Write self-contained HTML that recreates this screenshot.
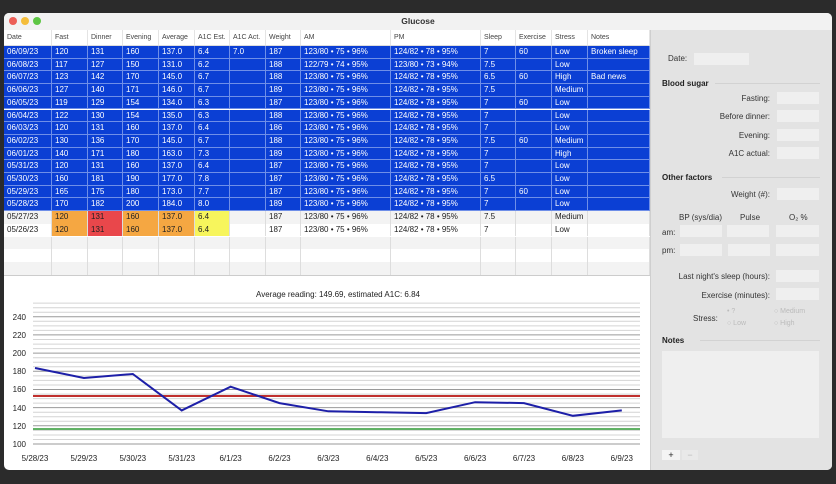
<!DOCTYPE html>
<html><head><meta charset="utf-8"><style>
*{margin:0;padding:0;box-sizing:border-box}
body{width:836px;height:484px;background:#2b2b2b;font-family:"Liberation Sans",Arial,sans-serif;font-size:8px;color:#222;position:relative;overflow:hidden}
.win{position:absolute;left:4px;top:13px;width:828px;height:457px;background:#fff;border-radius:5px;overflow:hidden}
.title{position:absolute;left:0;top:0;width:828px;height:17px;background:#f2f2f2;text-align:center;font-size:8.5px;font-weight:bold;line-height:17px;color:#333}
.dot{position:absolute;top:4px;width:8px;height:8px;border-radius:50%}
.hdr{position:absolute;left:0;top:17px;width:646px;height:16px;background:#fff;border-bottom:1px solid #ddd}
.row{position:absolute;left:0;width:646px;height:12.7px;display:flex}
.row div{height:100%;line-height:12.7px;padding-left:3px;white-space:nowrap;overflow:hidden;border-right:1px solid #ddd}
.hdr div{border-right:1px solid #e4e4e4;line-height:16px;padding-left:3px;height:100%;color:#444;font-size:7px}
.b{background:#0b3fd4;color:#fff}
.b div{border-right:1px solid #6f8fe8;border-bottom:1px solid #6f8fe8}
.c0{width:48px}.c1{width:36px}.c2{width:35px}.c3{width:36px}.c4{width:36px}.c5{width:35px}.c6{width:36px}.c7{width:35px}.c8{width:90px}.c9{width:90px}.c10{width:35px}.c11{width:36px}.c12{width:36px}.c13{width:62px}
.o{background:#f5a742}.r{background:#e9474b}.y{background:#f7f55c}
.side{position:absolute;left:646px;top:17px;width:182px;height:440px;background:#e3e3e3;border-left:1px solid #cfcfcf}
.lb{position:absolute;font-size:8px;color:#333;white-space:nowrap}
.rt{text-align:right;width:120px}
.f{position:absolute;background:#efefef;height:12px}
.bold{font-weight:bold;color:#222}
.ln{position:absolute;height:1px;background:#d2d2d2}
</style></head><body>
<div class="win">
<div class="title">Glucose</div>
<div class="dot" style="left:5px;background:#ec5f57"></div>
<div class="dot" style="left:17px;background:#f4bd3b"></div>
<div class="dot" style="left:29px;background:#5ec644"></div>
<div class="hdr" style="display:flex"><div class="c0">Date</div><div class="c1">Fast</div><div class="c2">Dinner</div><div class="c3">Evening</div><div class="c4">Average</div><div class="c5">A1C Est.</div><div class="c6">A1C Act.</div><div class="c7">Weight</div><div class="c8">AM</div><div class="c9">PM</div><div class="c10">Sleep</div><div class="c11">Exercise</div><div class="c12">Stress</div><div class="c13">Notes</div></div>

<div class="row b" style="top:33px"><div class="c0">06/09/23</div><div class="c1">120</div><div class="c2">131</div><div class="c3">160</div><div class="c4">137.0</div><div class="c5">6.4</div><div class="c6">7.0</div><div class="c7">187</div><div class="c8">123/80 • 75 • 96%</div><div class="c9">124/82 • 78 • 95%</div><div class="c10">7</div><div class="c11">60</div><div class="c12">Low</div><div class="c13">Broken sleep</div></div>
<div class="row b" style="top:45.7px"><div class="c0">06/08/23</div><div class="c1">117</div><div class="c2">127</div><div class="c3">150</div><div class="c4">131.0</div><div class="c5">6.2</div><div class="c6"></div><div class="c7">188</div><div class="c8">122/79 • 74 • 95%</div><div class="c9">123/80 • 73 • 94%</div><div class="c10">7.5</div><div class="c11"></div><div class="c12">Low</div><div class="c13"></div></div>
<div class="row b" style="top:58.4px"><div class="c0">06/07/23</div><div class="c1">123</div><div class="c2">142</div><div class="c3">170</div><div class="c4">145.0</div><div class="c5">6.7</div><div class="c6"></div><div class="c7">188</div><div class="c8">123/80 • 75 • 96%</div><div class="c9">124/82 • 78 • 95%</div><div class="c10">6.5</div><div class="c11">60</div><div class="c12">High</div><div class="c13">Bad news</div></div>
<div class="row b" style="top:71.1px"><div class="c0">06/06/23</div><div class="c1">127</div><div class="c2">140</div><div class="c3">171</div><div class="c4">146.0</div><div class="c5">6.7</div><div class="c6"></div><div class="c7">189</div><div class="c8">123/80 • 75 • 96%</div><div class="c9">124/82 • 78 • 95%</div><div class="c10">7.5</div><div class="c11"></div><div class="c12">Medium</div><div class="c13"></div></div>
<div class="row b" style="top:83.8px"><div class="c0">06/05/23</div><div class="c1">119</div><div class="c2">129</div><div class="c3">154</div><div class="c4">134.0</div><div class="c5">6.3</div><div class="c6"></div><div class="c7">187</div><div class="c8">123/80 • 75 • 96%</div><div class="c9">124/82 • 78 • 95%</div><div class="c10">7</div><div class="c11">60</div><div class="c12">Low</div><div class="c13"></div></div>
<div class="row b" style="top:96.5px"><div class="c0">06/04/23</div><div class="c1">122</div><div class="c2">130</div><div class="c3">154</div><div class="c4">135.0</div><div class="c5">6.3</div><div class="c6"></div><div class="c7">188</div><div class="c8">123/80 • 75 • 96%</div><div class="c9">124/82 • 78 • 95%</div><div class="c10">7</div><div class="c11"></div><div class="c12">Low</div><div class="c13"></div></div>
<div class="row b" style="top:109.2px"><div class="c0">06/03/23</div><div class="c1">120</div><div class="c2">131</div><div class="c3">160</div><div class="c4">137.0</div><div class="c5">6.4</div><div class="c6"></div><div class="c7">186</div><div class="c8">123/80 • 75 • 96%</div><div class="c9">124/82 • 78 • 95%</div><div class="c10">7</div><div class="c11"></div><div class="c12">Low</div><div class="c13"></div></div>
<div class="row b" style="top:121.9px"><div class="c0">06/02/23</div><div class="c1">130</div><div class="c2">136</div><div class="c3">170</div><div class="c4">145.0</div><div class="c5">6.7</div><div class="c6"></div><div class="c7">188</div><div class="c8">123/80 • 75 • 96%</div><div class="c9">124/82 • 78 • 95%</div><div class="c10">7.5</div><div class="c11">60</div><div class="c12">Medium</div><div class="c13"></div></div>
<div class="row b" style="top:134.6px"><div class="c0">06/01/23</div><div class="c1">140</div><div class="c2">171</div><div class="c3">180</div><div class="c4">163.0</div><div class="c5">7.3</div><div class="c6"></div><div class="c7">189</div><div class="c8">123/80 • 75 • 96%</div><div class="c9">124/82 • 78 • 95%</div><div class="c10">7</div><div class="c11"></div><div class="c12">High</div><div class="c13"></div></div>
<div class="row b" style="top:147.3px"><div class="c0">05/31/23</div><div class="c1">120</div><div class="c2">131</div><div class="c3">160</div><div class="c4">137.0</div><div class="c5">6.4</div><div class="c6"></div><div class="c7">187</div><div class="c8">123/80 • 75 • 96%</div><div class="c9">124/82 • 78 • 95%</div><div class="c10">7</div><div class="c11"></div><div class="c12">Low</div><div class="c13"></div></div>
<div class="row b" style="top:160px"><div class="c0">05/30/23</div><div class="c1">160</div><div class="c2">181</div><div class="c3">190</div><div class="c4">177.0</div><div class="c5">7.8</div><div class="c6"></div><div class="c7">187</div><div class="c8">123/80 • 75 • 96%</div><div class="c9">124/82 • 78 • 95%</div><div class="c10">6.5</div><div class="c11"></div><div class="c12">Low</div><div class="c13"></div></div>
<div class="row b" style="top:172.7px"><div class="c0">05/29/23</div><div class="c1">165</div><div class="c2">175</div><div class="c3">180</div><div class="c4">173.0</div><div class="c5">7.7</div><div class="c6"></div><div class="c7">187</div><div class="c8">123/80 • 75 • 96%</div><div class="c9">124/82 • 78 • 95%</div><div class="c10">7</div><div class="c11">60</div><div class="c12">Low</div><div class="c13"></div></div>
<div class="row b" style="top:185.4px"><div class="c0">05/28/23</div><div class="c1">170</div><div class="c2">182</div><div class="c3">200</div><div class="c4">184.0</div><div class="c5">8.0</div><div class="c6"></div><div class="c7">189</div><div class="c8">123/80 • 75 • 96%</div><div class="c9">124/82 • 78 • 95%</div><div class="c10">7</div><div class="c11"></div><div class="c12">Low</div><div class="c13"></div></div>
<div class="row" style="top:198.1px;background:#f3f3f3"><div class="c0">05/27/23</div><div class="c1 o">120</div><div class="c2 r">131</div><div class="c3 o">160</div><div class="c4 o">137.0</div><div class="c5 y">6.4</div><div class="c6"></div><div class="c7">187</div><div class="c8">123/80 • 75 • 96%</div><div class="c9">124/82 • 78 • 95%</div><div class="c10">7.5</div><div class="c11"></div><div class="c12">Medium</div><div class="c13"></div></div>
<div class="row" style="top:210.8px"><div class="c0">05/26/23</div><div class="c1 o">120</div><div class="c2 r">131</div><div class="c3 o">160</div><div class="c4 o">137.0</div><div class="c5 y">6.4</div><div class="c6"></div><div class="c7">187</div><div class="c8">123/80 • 75 • 96%</div><div class="c9">124/82 • 78 • 95%</div><div class="c10">7</div><div class="c11"></div><div class="c12">Low</div><div class="c13"></div></div>
<div class="row" style="top:223.5px;background:#f3f3f3"><div class="c0"></div><div class="c1"></div><div class="c2"></div><div class="c3"></div><div class="c4"></div><div class="c5"></div><div class="c6"></div><div class="c7"></div><div class="c8"></div><div class="c9"></div><div class="c10"></div><div class="c11"></div><div class="c12"></div><div class="c13"></div></div>
<div class="row" style="top:236.2px"><div class="c0"></div><div class="c1"></div><div class="c2"></div><div class="c3"></div><div class="c4"></div><div class="c5"></div><div class="c6"></div><div class="c7"></div><div class="c8"></div><div class="c9"></div><div class="c10"></div><div class="c11"></div><div class="c12"></div><div class="c13"></div></div>
<div class="row" style="top:248.9px;height:14px;background:#f3f3f3;border-bottom:1px solid #ccc"><div class="c0"></div><div class="c1"></div><div class="c2"></div><div class="c3"></div><div class="c4"></div><div class="c5"></div><div class="c6"></div><div class="c7"></div><div class="c8"></div><div class="c9"></div><div class="c10"></div><div class="c11"></div><div class="c12"></div><div class="c13"></div></div>

<svg style="position:absolute;left:-4px;top:-13px" width="836" height="484" font-family="Liberation Sans,Arial,sans-serif" font-size="8">
<text x="338" y="297" text-anchor="middle" fill="#222">Average reading: 149.69, estimated A1C: 6.84</text>
<g stroke="#d4d4d4" stroke-width="1">
<line x1="33" x2="640" y1="439.5" y2="439.5"/><line x1="33" x2="640" y1="435" y2="435"/><line x1="33" x2="640" y1="430.4" y2="430.4"/><line x1="33" x2="640" y1="421.3" y2="421.3"/><line x1="33" x2="640" y1="416.8" y2="416.8"/><line x1="33" x2="640" y1="412.2" y2="412.2"/><line x1="33" x2="640" y1="403.1" y2="403.1"/><line x1="33" x2="640" y1="398.6" y2="398.6"/><line x1="33" x2="640" y1="394.1" y2="394.1"/><line x1="33" x2="640" y1="385" y2="385"/><line x1="33" x2="640" y1="380.4" y2="380.4"/><line x1="33" x2="640" y1="375.9" y2="375.9"/><line x1="33" x2="640" y1="366.8" y2="366.8"/><line x1="33" x2="640" y1="362.2" y2="362.2"/><line x1="33" x2="640" y1="357.7" y2="357.7"/><line x1="33" x2="640" y1="348.6" y2="348.6"/><line x1="33" x2="640" y1="344.1" y2="344.1"/><line x1="33" x2="640" y1="339.5" y2="339.5"/><line x1="33" x2="640" y1="330.4" y2="330.4"/><line x1="33" x2="640" y1="325.9" y2="325.9"/><line x1="33" x2="640" y1="321.3" y2="321.3"/><line x1="33" x2="640" y1="312.2" y2="312.2"/><line x1="33" x2="640" y1="307.7" y2="307.7"/><line x1="33" x2="640" y1="303.1" y2="303.1"/>
</g>
<g stroke="#9a9a9a" stroke-width="1">
<line x1="33" x2="640" y1="444" y2="444"/><line x1="33" x2="640" y1="425.8" y2="425.8"/><line x1="33" x2="640" y1="407.6" y2="407.6"/><line x1="33" x2="640" y1="389.5" y2="389.5"/><line x1="33" x2="640" y1="371.3" y2="371.3"/><line x1="33" x2="640" y1="353.1" y2="353.1"/><line x1="33" x2="640" y1="334.9" y2="334.9"/><line x1="33" x2="640" y1="316.7" y2="316.7"/>
</g>
<g fill="#222" text-anchor="end">
<text x="26" y="447">100</text><text x="26" y="429">120</text><text x="26" y="411">140</text><text x="26" y="392">160</text><text x="26" y="374">180</text><text x="26" y="356">200</text><text x="26" y="338">220</text><text x="26" y="320">240</text>
</g>
<line x1="33" x2="640" y1="396" y2="396" stroke="#c0302e" stroke-width="2"/>
<line x1="33" x2="640" y1="429" y2="429" stroke="#2f9a34" stroke-width="1.5"/>
<polyline fill="none" stroke="#1d1fa8" stroke-width="2" points="35,368 83.9,378 132.8,374 181.7,410.4 230.6,386.7 279.5,403.1 328.4,411.3 377.3,412.2 426.2,413.1 475.1,402.2 524,403.1 572.9,415.8 621.8,410.4"/>
<g fill="#222" text-anchor="middle">
<text x="35" y="461">5/28/23</text><text x="83.9" y="461">5/29/23</text><text x="132.8" y="461">5/30/23</text><text x="181.7" y="461">5/31/23</text><text x="230.6" y="461">6/1/23</text><text x="279.5" y="461">6/2/23</text><text x="328.4" y="461">6/3/23</text><text x="377.3" y="461">6/4/23</text><text x="426.2" y="461">6/5/23</text><text x="475.1" y="461">6/6/23</text><text x="524" y="461">6/7/23</text><text x="572.9" y="461">6/8/23</text><text x="621.8" y="461">6/9/23</text>
</g>
</svg>

<div class="side"></div>
</div>
<div style="position:absolute;left:0;top:0">
<div class="lb" style="left:668px;top:54px">Date:</div><div class="f" style="left:694px;top:53px;width:55px"></div>
<div class="lb bold" style="left:662px;top:79px">Blood sugar</div><div class="ln" style="left:715px;top:83px;width:105px"></div>
<div class="lb rt" style="left:650px;top:94px">Fasting:</div><div class="f" style="left:777px;top:92px;width:42px"></div>
<div class="lb rt" style="left:650px;top:112px">Before dinner:</div><div class="f" style="left:777px;top:110px;width:42px"></div>
<div class="lb rt" style="left:650px;top:131px">Evening:</div><div class="f" style="left:777px;top:129px;width:42px"></div>
<div class="lb rt" style="left:650px;top:149px">A1C actual:</div><div class="f" style="left:777px;top:147px;width:42px"></div>
<div class="lb bold" style="left:662px;top:173px">Other factors</div><div class="ln" style="left:722px;top:177px;width:98px"></div>
<div class="lb rt" style="left:650px;top:190px">Weight (#):</div><div class="f" style="left:777px;top:188px;width:42px"></div>
<div class="lb" style="left:679px;top:213px">BP (sys/dia)</div><div class="lb" style="left:740px;top:213px">Pulse</div><div class="lb" style="left:789px;top:213px">O₂ %</div>
<div class="lb" style="left:662px;top:228px">am:</div><div class="f" style="left:680px;top:225px;width:42px"></div><div class="f" style="left:727px;top:225px;width:42px"></div><div class="f" style="left:776px;top:225px;width:43px"></div>
<div class="lb" style="left:662px;top:246px">pm:</div><div class="f" style="left:680px;top:244px;width:42px"></div><div class="f" style="left:728px;top:244px;width:42px"></div><div class="f" style="left:776px;top:244px;width:43px"></div>
<div class="lb rt" style="left:650px;top:272px">Last night's sleep (hours):</div><div class="f" style="left:776px;top:270px;width:43px"></div>
<div class="lb rt" style="left:650px;top:291px">Exercise (minutes):</div><div class="f" style="left:776px;top:288px;width:43px"></div>
<div class="lb" style="left:693px;top:314px">Stress:</div>
<div class="lb" style="left:727px;top:308px;color:#bbb;font-size:7px">• ?</div><div class="lb" style="left:727px;top:320px;color:#bbb;font-size:7px">○ Low</div>
<div class="lb" style="left:774px;top:308px;color:#bbb;font-size:7px">○ Medium</div><div class="lb" style="left:774px;top:320px;color:#bbb;font-size:7px">○ High</div>
<div class="lb bold" style="left:662px;top:336px">Notes</div><div class="ln" style="left:700px;top:340px;width:120px"></div>
<div class="f" style="left:662px;top:351px;width:157px;height:87px"></div>
<div style="position:absolute;left:662px;top:450px;width:18px;height:10px;background:#f4f4f4;font-size:9px;text-align:center;line-height:10px">+</div>
<div style="position:absolute;left:682px;top:450px;width:16px;height:10px;background:#e9e9e9;color:#bbb;font-size:9px;text-align:center;line-height:10px">−</div>
</div>
</body></html>
